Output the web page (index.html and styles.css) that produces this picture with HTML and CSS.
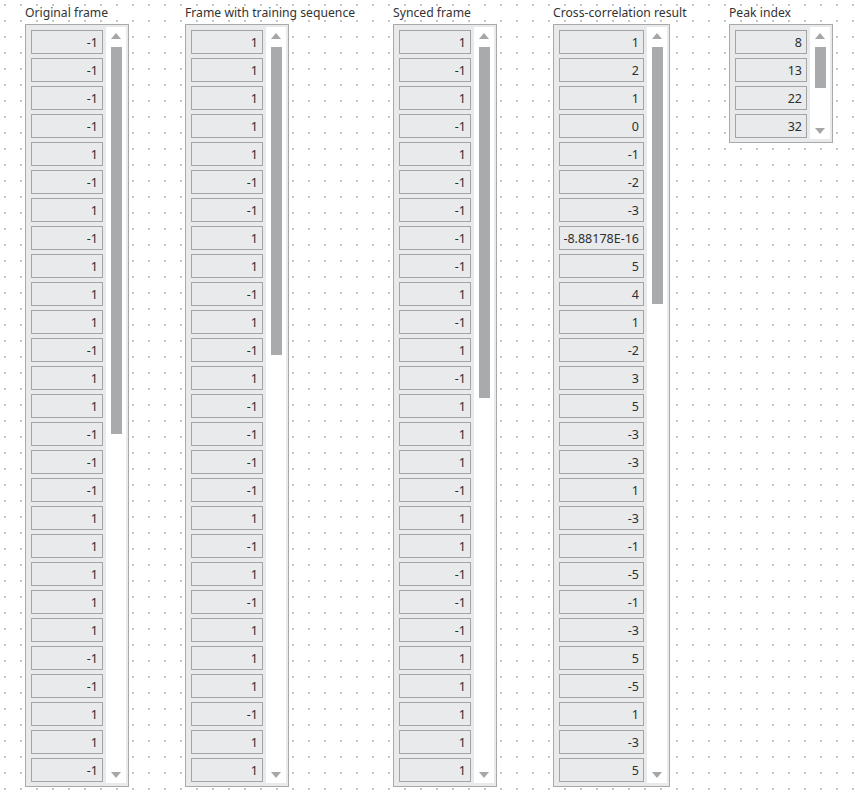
FILE: index.html
```html
<!DOCTYPE html>
<html>
<head>
<meta charset="utf-8">
<link rel="stylesheet" href="styles.css">
</head>
<body>
<div class="panel">
  <section class="col">
    <div class="label">Original frame</div>
    <div class="frame">
      <div class="cells">
        <div class="cell">-1</div><div class="cell">-1</div><div class="cell">-1</div><div class="cell">-1</div><div class="cell">1</div><div class="cell">-1</div><div class="cell">1</div><div class="cell">-1</div><div class="cell">1</div><div class="cell">1</div><div class="cell">1</div><div class="cell">-1</div><div class="cell">1</div><div class="cell">1</div><div class="cell">-1</div><div class="cell">-1</div><div class="cell">-1</div><div class="cell">1</div><div class="cell">1</div><div class="cell">1</div><div class="cell">1</div><div class="cell">1</div><div class="cell">-1</div><div class="cell">-1</div><div class="cell">1</div><div class="cell">1</div><div class="cell">-1</div>
      </div>
      <div class="scroll">
        <div class="arrow-up"></div>
        <div class="thumb" style="height:387px"></div>
        <div class="arrow-down"></div>
      </div>
    </div>
  </section>
  <section class="col">
    <div class="label">Frame with training sequence</div>
    <div class="frame">
      <div class="cells">
        <div class="cell">1</div><div class="cell">1</div><div class="cell">1</div><div class="cell">1</div><div class="cell">1</div><div class="cell">-1</div><div class="cell">-1</div><div class="cell">1</div><div class="cell">1</div><div class="cell">-1</div><div class="cell">1</div><div class="cell">-1</div><div class="cell">1</div><div class="cell">-1</div><div class="cell">-1</div><div class="cell">-1</div><div class="cell">-1</div><div class="cell">1</div><div class="cell">-1</div><div class="cell">1</div><div class="cell">-1</div><div class="cell">1</div><div class="cell">1</div><div class="cell">1</div><div class="cell">-1</div><div class="cell">1</div><div class="cell">1</div>
      </div>
      <div class="scroll">
        <div class="arrow-up"></div>
        <div class="thumb" style="height:308px"></div>
        <div class="arrow-down"></div>
      </div>
    </div>
  </section>
  <section class="col">
    <div class="label">Synced frame</div>
    <div class="frame">
      <div class="cells">
        <div class="cell">1</div><div class="cell">-1</div><div class="cell">1</div><div class="cell">-1</div><div class="cell">1</div><div class="cell">-1</div><div class="cell">-1</div><div class="cell">-1</div><div class="cell">-1</div><div class="cell">1</div><div class="cell">-1</div><div class="cell">1</div><div class="cell">-1</div><div class="cell">1</div><div class="cell">1</div><div class="cell">1</div><div class="cell">-1</div><div class="cell">1</div><div class="cell">1</div><div class="cell">-1</div><div class="cell">-1</div><div class="cell">-1</div><div class="cell">1</div><div class="cell">1</div><div class="cell">1</div><div class="cell">1</div><div class="cell">1</div>
      </div>
      <div class="scroll">
        <div class="arrow-up"></div>
        <div class="thumb" style="height:351px"></div>
        <div class="arrow-down"></div>
      </div>
    </div>
  </section>
  <section class="col">
    <div class="label">Cross-correlation result</div>
    <div class="frame">
      <div class="cells wide">
        <div class="cell">1</div><div class="cell">2</div><div class="cell">1</div><div class="cell">0</div><div class="cell">-1</div><div class="cell">-2</div><div class="cell">-3</div><div class="cell">-8.88178E-16</div><div class="cell">5</div><div class="cell">4</div><div class="cell">1</div><div class="cell">-2</div><div class="cell">3</div><div class="cell">5</div><div class="cell">-3</div><div class="cell">-3</div><div class="cell">1</div><div class="cell">-3</div><div class="cell">-1</div><div class="cell">-5</div><div class="cell">-1</div><div class="cell">-3</div><div class="cell">5</div><div class="cell">-5</div><div class="cell">1</div><div class="cell">-3</div><div class="cell">5</div>
      </div>
      <div class="scroll">
        <div class="arrow-up"></div>
        <div class="thumb" style="height:257px"></div>
        <div class="arrow-down"></div>
      </div>
    </div>
  </section>
  <section class="col">
    <div class="label">Peak index</div>
    <div class="frame">
      <div class="cells">
        <div class="cell">8</div><div class="cell">13</div><div class="cell">22</div><div class="cell">32</div>
      </div>
      <div class="scroll">
        <div class="arrow-up"></div>
        <div class="thumb" style="height:41px"></div>
        <div class="arrow-down"></div>
      </div>
    </div>
  </section>
</div>
</body>
</html>
```
FILE: styles.css
```css
html, body {
  margin: 0;
  padding: 0;
}
body {
  width: 855px;
  height: 799px;
  overflow: hidden;
  font-family: "Noto Sans", "Open Sans", sans-serif;
  color: #333;
  background-color: #c6c6c6;
  background-image:
    linear-gradient(90deg, transparent 2px, #fff 2px),
    linear-gradient(transparent 2px, #fff 2px);
  background-size: 16px 16px;
  background-position: 4px 4px;
}
.panel {
  display: grid;
  grid-template-columns: 160px 208px 160px 176px auto;
  align-items: start;
  padding-left: 25px;
}
.col {
  display: flex;
  flex-direction: column;
  align-items: flex-start;
}
.label {
  font-size: 12.2px;
  line-height: 16px;
  height: 16px;
  padding-top: 5px;
  margin-bottom: 3px;
  white-space: nowrap;
}
.frame {
  display: flex;
  border: 1px solid #a7a9ab;
  background: #e8eaec;
  padding: 2px 2px 3px 5px;
}
.cells {
  display: flex;
  flex-direction: column;
  gap: 4px;
  padding: 3px 0 1px 0;
  width: 72px;
}
.cells.wide {
  width: 85px;
}
.cell {
  box-sizing: border-box;
  height: 24px;
  border: 1px solid #a2a4a6;
  background: #e8eaec;
  font-size: 12.5px;
  line-height: 23px;
  text-align: right;
  padding-right: 4px;
  color: #2e2e2e;
  white-space: nowrap;
  overflow: hidden;
}
.scroll {
  display: flex;
  flex-direction: column;
  align-items: center;
  width: 20px;
  margin-left: 3px;
  background: #fff;
  padding: 6px 0 5px 0;
  box-sizing: border-box;
}
.arrow-up {
  width: 0;
  height: 0;
  border-left: 5px solid transparent;
  border-right: 5px solid transparent;
  border-bottom: 6px solid #a4a6a8;
}
.arrow-down {
  width: 0;
  height: 0;
  margin-top: auto;
  border-left: 5px solid transparent;
  border-right: 5px solid transparent;
  border-top: 6px solid #a4a6a8;
}
.thumb {
  width: 11px;
  margin-top: 8px;
  background: #a8aaac;
}
```
